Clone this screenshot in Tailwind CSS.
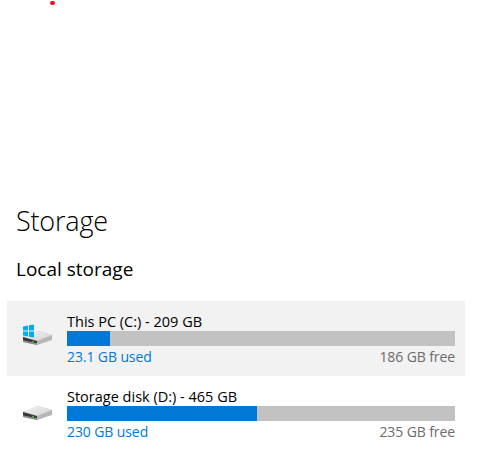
<!DOCTYPE html>
<html lang="en">
<head>
  <meta charset="UTF-8">
  <title>Storage</title>
  <script src="https://cdn.jsdelivr.net/npm/@tailwindcss/browser@4"></script>
</head>
<body class="bg-white font-['Open_Sans',sans-serif] text-black h-[465px] overflow-hidden">
  <!-- red dot -->
  <div class="ml-[50px] mt-px w-[5px] h-1 rounded-full bg-[#e81123]"></div>

  <h1 class="ml-4 mt-[198px] text-[27px] leading-[36px] font-light tracking-[-0.2px]">Storage</h1>
  <h2 class="ml-4 mt-[18px] text-[19px] leading-[24px]">Local storage</h2>

  <div class="mt-[20px] ml-[7px] w-[458px] flex flex-col">
    <!-- C drive -->
    <div class="h-[75px] bg-[#f2f2f2] flex pl-[15px] pr-[10px]">
      <div class="w-[45px] shrink-0 pt-[22px]">
        <svg width="32" height="24" viewBox="0 0 32 24">
          <defs>
            <linearGradient id="top" x1="0" y1="0" x2="1" y2="1"><stop offset="0" stop-color="#f4f4f4"/><stop offset="1" stop-color="#d2d2d2"/></linearGradient>
          </defs>
          <path d="M1 14 L16 8 L30 12 L30 17 L15 22 L1 19 Z" fill="#b6b6b6"/>
          <path d="M1 14 L16 8 L30 12 L15 18 Z" fill="url(#top)"/>
          <path d="M1 14 L15 18 L15 20.5 L1 17.5 Z" fill="#3a3a3a"/>
          <path d="M1 17.5 L15 20.5 L15 22 L1 19 Z" fill="#8c8c8c"/>
          <rect x="10" y="18" width="2" height="1.5" fill="#3fae49"/>
          <path d="M1 3.5 L6 2.5 V7.5 H1 Z M7 2.3 L12 1.5 V7.5 H7 Z M1 8.5 H6 V13.5 L1 12.5 Z M7 8.5 H12 V14.5 L7 13.7 Z" fill="#00adef"/>
        </svg>
      </div>
      <div class="flex-1 min-w-0 pt-[11px]">
        <div class="text-[14.5px] leading-[19px]">This PC (C:) - 209 GB</div>
        <div class="h-[15px] bg-[#c2c2c2]"><div class="h-full w-[43px] bg-[#0078d7]"></div></div>
        <div class="flex justify-between text-[14px] leading-[21px] tracking-[-0.1px]">
          <span class="text-[#0078d7]">23.1 GB used</span>
          <span class="text-[#6b6b6b]">186 GB free</span>
        </div>
      </div>
    </div>
    <!-- D drive -->
    <div class="h-[75px] flex pl-[15px] pr-[10px]">
      <div class="w-[45px] shrink-0 pt-[22px]">
        <svg width="32" height="24" viewBox="0 0 32 24">
          <path d="M1 14 L16 8 L30 12 L30 17 L15 22 L1 19 Z" fill="#b6b6b6"/>
          <path d="M1 14 L16 8 L30 12 L15 18 Z" fill="url(#top)"/>
          <path d="M1 14 L15 18 L15 20.5 L1 17.5 Z" fill="#3a3a3a"/>
          <path d="M1 17.5 L15 20.5 L15 22 L1 19 Z" fill="#8c8c8c"/>
          <rect x="10" y="18" width="2" height="1.5" fill="#3fae49"/>
        </svg>
      </div>
      <div class="flex-1 min-w-0 pt-[11px]">
        <div class="text-[14.5px] leading-[19px]">Storage disk (D:) - 465 GB</div>
        <div class="h-[15px] bg-[#c2c2c2]"><div class="h-full w-[190px] bg-[#0078d7]"></div></div>
        <div class="flex justify-between text-[14px] leading-[21px] tracking-[-0.1px]">
          <span class="text-[#0078d7]">230 GB used</span>
          <span class="text-[#6b6b6b]">235 GB free</span>
        </div>
      </div>
    </div>
  </div>
</body>
</html>
